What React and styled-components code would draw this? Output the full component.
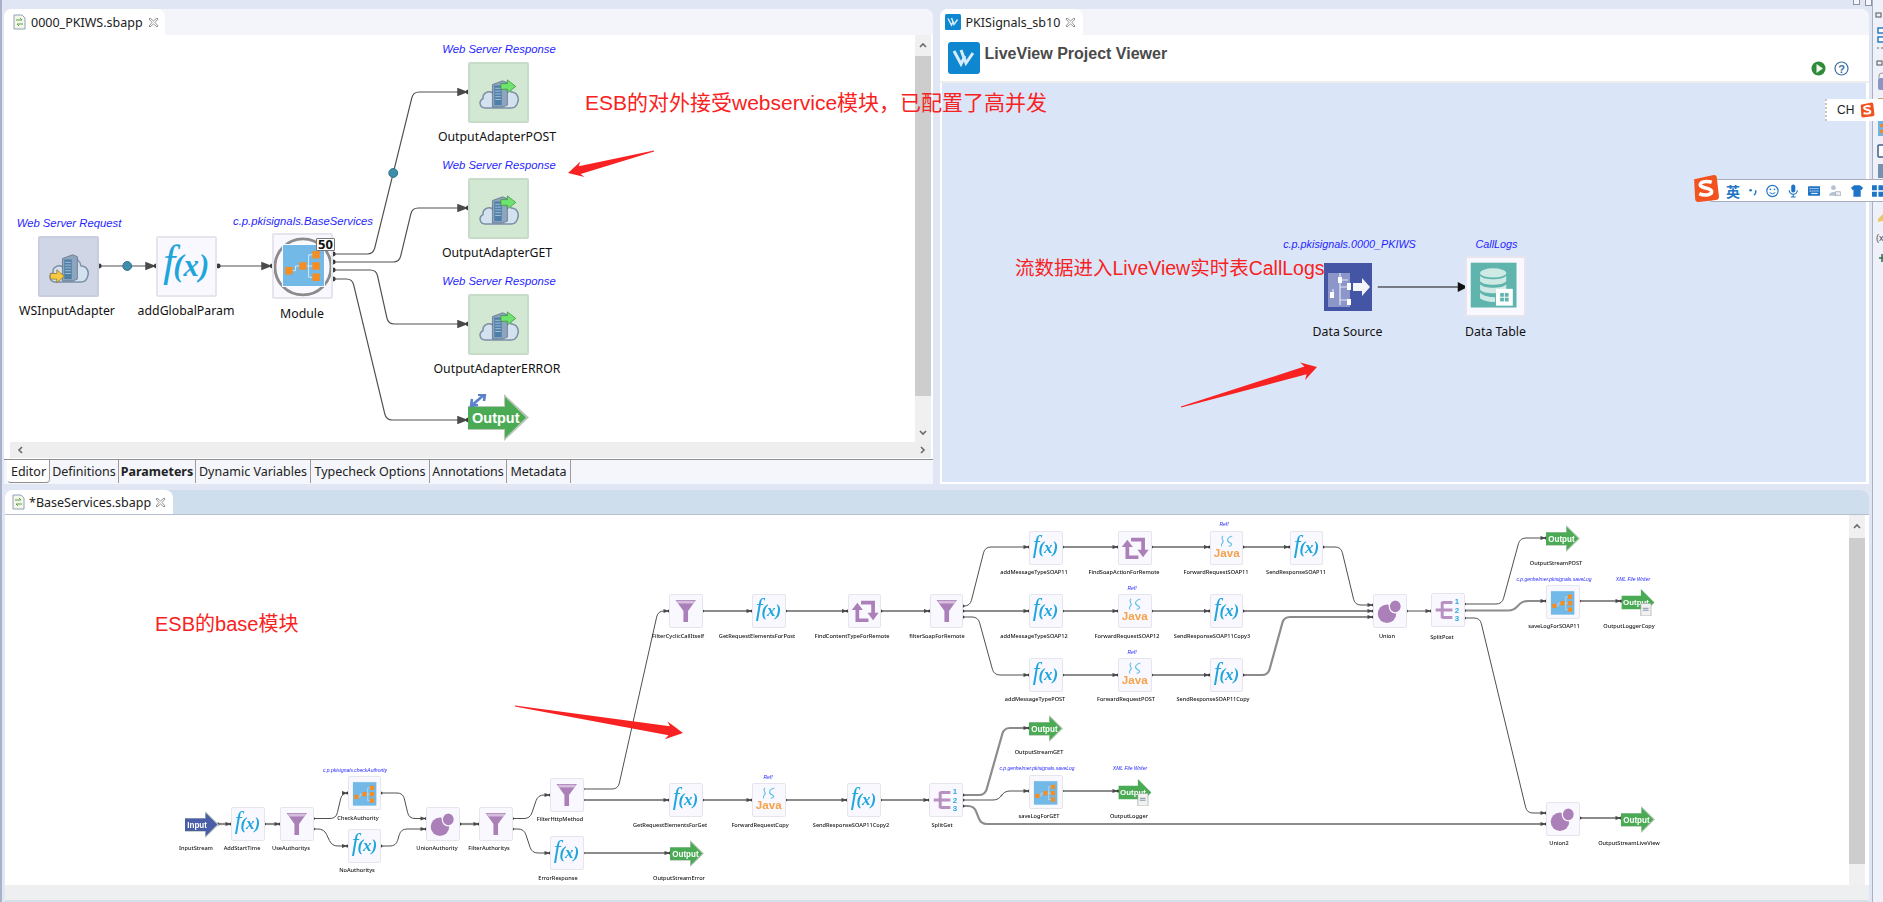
import React from 'react';
import styled, { createGlobalStyle } from 'styled-components';

const GlobalStyle = createGlobalStyle`
  html, body {
    margin: 0;
    padding: 0;
    overflow: hidden;
    background: #e0e6f4;
  }
`;

const UI_FONT = `"Noto Sans", "Liberation Sans", "Noto Sans CJK SC", sans-serif`;

/* ---------- workbench shell ---------- */

const Page = styled.div`
  position: relative;
  display: flex;
  width: 1883px;
  height: 902px;
  overflow: hidden;
  background: #e0e6f4;
  font-family: ${UI_FONT};
`;

const Workbench = styled.div`
  display: flex;
  flex-direction: column;
  width: 1872px;
  padding: 9px 3px 0 4px;
  box-sizing: border-box;
  border-left: 2px solid #a9b1c9;
`;

const TopRow = styled.div`
  display: flex;
  gap: 7px;
  height: 475px;
  margin-left: -2px;
`;

const Panel = styled.div`
  display: flex;
  flex-direction: column;
  width: ${({ $w }) => $w}px;
  height: ${({ $h }) => $h}px;
  background: #fff;
  border-radius: 8px 8px 0 0;
  overflow: hidden;
`;

const BottomPanel = styled(Panel)`
  margin-top: 6px;
  margin-left: -1px;
  flex: none;
`;

const TabStrip = styled.div`
  display: flex;
  flex: none;
  height: ${({ $h }) => $h || 26}px;
  background: ${({ $bg }) => $bg || '#f3f5fb'};
  border-bottom: ${({ $line }) => ($line ? `1px solid ${$line}` : 'none')};
  box-sizing: border-box;
`;

const FileTab = styled.div`
  display: flex;
  align-items: center;
  gap: ${({ $gap }) => $gap || 5}px;
  width: ${({ $w }) => $w}px;
  padding-left: ${({ $pad }) => $pad || 9}px;
  box-sizing: border-box;
  background: #fff;
  border-radius: 0 8px 0 0;
  font-size: 12.5px;
  color: #222;
  white-space: nowrap;
`;

const TabClose = styled.span`
  display: inline-flex;
`;

const EditorRow = styled.div`
  display: flex;
  flex: 1;
  min-height: 0;
`;

const Canvas = styled.div`
  position: relative;
  flex: 1;
  overflow: hidden;
  background: ${({ $bg }) => $bg || '#fff'};
  filter: ${({ $soft }) => ($soft ? 'blur(0.35px)' : 'none')};
`;

const VScroll = styled.div`
  display: flex;
  flex-direction: column;
  flex: none;
  width: 16px;
  margin: ${({ $m }) => $m || '0 2px 0 0'};
  background: #f0f0f0;
`;

const ScrollEnd = styled.div`
  display: flex;
  align-items: center;
  justify-content: center;
  height: ${({ $h }) => $h}px;
  flex: none;
`;

const ScrollThumb = styled.div`
  flex: ${({ $h }) => ($h ? `0 0 ${$h}px` : '1')};
  background: ${({ $empty }) => ($empty ? 'transparent' : '#cdcdcd')};
`;

const HScroll = styled.div`
  display: flex;
  align-items: center;
  justify-content: space-between;
  flex: none;
  height: 16px;
  margin: ${({ $m }) => $m || '0 2px 0 6px'};
  padding: 0 4px 0 6px;
  background: #eeeeee;
`;

const SheetTabs = styled.div`
  display: flex;
  flex: none;
  height: 25px;
  margin-top: 1px;
  padding-left: 3px;
  background: #f4f6fb;
  border-top: 1px solid #8f8f8f;
  box-sizing: border-box;
`;

const SheetTab = styled.div`
  display: flex;
  align-items: center;
  justify-content: center;
  width: ${({ $w }) => $w}px;
  height: 23px;
  font-size: 12.5px;
  font-weight: ${({ $bold }) => ($bold ? 700 : 400)};
  color: #222;
  background: ${({ $active }) => ($active ? '#fff' : 'transparent')};
  border-right: 1px solid #9a9a9a;
  border-bottom: ${({ $active }) => ($active ? '1px solid #8f8f8f' : 'none')};
  border-left: ${({ $active }) => ($active ? '1px solid transparent' : 'none')};
  border-radius: ${({ $active }) => ($active ? '0 0 4px 4px' : '0')};
  box-sizing: border-box;
  white-space: nowrap;
`;

const ViewerHeader = styled.div`
  display: flex;
  flex: none;
  height: 48px;
  padding: 7px 20px 0 8px;
  gap: 5px;
  background: #fff;
  border-bottom: 2px solid #eeeeee;
  box-sizing: border-box;
`;

const ViewerTitle = styled.div`
  flex: 1;
  margin-top: 3px;
  font-family: "Liberation Sans", sans-serif;
  font-size: 16px;
  font-weight: 700;
  color: #4a4a4a;
`;

const ViewerActions = styled.div`
  display: flex;
  gap: 8px;
  align-items: center;
  align-self: flex-end;
  margin-bottom: 5px;
`;

const ViewerBody = styled.div`
  display: flex;
  flex: 1;
  min-height: 0;
  margin: 0 3px 2px 2px;
`;

const BottomStrip = styled.div`
  flex: none;
  height: 15px;
  background: #eeeff1;
  border-bottom: 2px solid #d7e0e8;
`;

const Trim = styled.div`
  position: relative;
  flex: 1;
  background: #eef1f8;
  border-left: 1px solid #a9b1c9;
  overflow: hidden;
`;

const MiniButtons = styled.div`
  position: absolute;
  top: -2px;
  left: 1853px;
  display: flex;
  gap: 5px;
`;

const MiniButton = styled.span`
  display: block;
  width: 5px;
  height: ${({ $h }) => $h}px;
  border: 1px solid #8a93a8;
  background: #f6f7fb;
`;

/* ---------- diagram parts ---------- */

const Place = styled.div.attrs(({ $x, $y, $w, $h }) => ({
  style: { left: $x, top: $y, width: $w, height: $h },
}))`
  position: absolute;
  box-sizing: border-box;
`;

const NodeBox = styled(Place)`
  display: flex;
  align-items: center;
  justify-content: center;
  background: ${({ $tone }) =>
    $tone === 'green' ? '#d3e8d3' : $tone === 'slate' ? '#d0d6e6' : $tone === 'none' ? 'transparent' : '#f9f8fe'};
  border: ${({ $tone, $b }) =>
    $tone === 'none'
      ? 'none'
      : `${$b}px solid ${$tone === 'green' ? '#c6dcc8' : $tone === 'slate' ? '#c8cede' : '#e6e5ee'}`};
  border-radius: 2px;
  svg {
    display: block;
    width: 100%;
    height: 100%;
  }
`;

const CountBadge = styled(Place)`
  display: flex;
  align-items: center;
  justify-content: center;
  background: #fff;
  border: 1px solid #777;
  border-radius: 1px;
  font-size: 13px;
  font-weight: 700;
  line-height: 1;
  color: #111;
`;

const Caption = styled.span.attrs(({ $x, $y }) => ({
  style: { left: $x, top: $y },
}))`
  position: absolute;
  transform: translate(-50%, -50%);
  white-space: nowrap;
  font-family: ${UI_FONT};
  font-size: ${({ $size }) => $size}px;
  font-weight: ${({ $weight }) => $weight || 400};
  color: #111;
`;

const Note = styled(Caption)`
  font-family: "Liberation Sans", sans-serif;
  font-style: italic;
  color: #1f1fff;
`;

const WireLayer = styled.svg`
  position: absolute;
  inset: 0;
  width: 100%;
  height: 100%;
`;

/* ---------- page level overlays ---------- */

const Callout = styled.div.attrs(({ $x, $y }) => ({ style: { left: $x, top: $y } }))`
  position: absolute;
  transform: translateY(-50%);
  font-family: "Liberation Sans", "Noto Sans CJK SC", sans-serif;
  font-size: ${({ $size }) => $size}px;
  color: #f92222;
  white-space: nowrap;
`;

const ArrowLayer = styled.svg`
  position: absolute;
  inset: 0;
  width: 1883px;
  height: 902px;
  pointer-events: none;
`;

const ImeTray = styled.div`
  position: absolute;
  top: 99px;
  left: 1825px;
  display: flex;
  align-items: center;
  gap: 5px;
  width: 58px;
  height: 22px;
  padding-left: 10px;
  box-sizing: border-box;
  background: #fff;
  border-left: 2px dotted #c4c4c4;
  font-family: "Liberation Sans", sans-serif;
  font-size: 12px;
  color: #222;
`;

const ImeBar = styled.div`
  position: absolute;
  top: 179px;
  left: 1710px;
  display: flex;
  align-items: center;
  gap: 9px;
  width: 173px;
  height: 23px;
  padding-left: 15px;
  box-sizing: border-box;
  background: #fff;
  border: 1px solid #a7adbb;
  border-right: none;
  border-radius: 2px 0 0 2px;
  color: #1f75c5;
`;

const ImeGlyph = styled.span`
  font-family: "Noto Sans CJK SC", sans-serif;
  font-size: 14px;
  font-weight: 700;
  line-height: 1;
`;

const ImeLogo = styled.div`
  position: absolute;
  top: 174px;
  left: 1691px;
  width: 29px;
  height: 29px;
`;

const TrimIcons = styled.svg`
  display: block;
  position: absolute;
  top: 0;
  left: 0;
  width: 11px;
  height: 280px;
`;

/* ---------- icons ---------- */

const Cloud = () => (
  <path
    d="M16 47 C10 47 9 39 14 37 C13 31 20 28 24 31 C26 20 42 18 44 30 C50 30 53 36 51 41 C50 45 47 47 44 47 Z"
    fill="#d3e2ee"
    stroke="#7b8fa6"
    strokeWidth="1.6"
  />
);

const Server = () => (
  <g>
    <path d="M24 22 L35 18 L40 20 L40 44 L35 46 L24 46 Z" fill="#8fa5bd" stroke="#5a6f88" strokeWidth="0.8" />
    <rect x="26" y="23" width="8" height="21" fill="#4f7fa8" />
    <path d="M27 26 h6 M27 29 h6 M27 32 h6 M27 35 h6 M27 38 h6" stroke="#a8c3d9" strokeWidth="1" />
  </g>
);

const WebInIcon = () => (
  <svg viewBox="0 0 61 61">
    <Cloud />
    <Server />
    <path d="M11 38 H18 V34 L26 41 L18 48 V44 H11 Z" fill="#f6c945" stroke="#8b7428" strokeWidth="0.8" />
  </svg>
);

const WebOutIcon = () => (
  <svg viewBox="0 0 61 61">
    <Cloud />
    <Server />
    <path d="M33 21 H40 V17 L49 24 L40 31 V27 H33 Z" fill="#6fe36f" stroke="#3f8f3f" strokeWidth="0.8" />
  </svg>
);

const FxIcon = () => (
  <svg viewBox="0 0 61 61">
    <text x="30" y="41" textAnchor="middle" fontFamily="Liberation Serif, serif" fontStyle="italic" fontWeight="700" fontSize="33" fill="#1ea6dc">
      <tspan fontSize="47" fontWeight="400">f</tspan>
      <tspan dx="-2">(x)</tspan>
    </text>
  </svg>
);

const ModuleArt = ({ size = 45 }) => (
  <g transform={`scale(${size / 45})`}>
    <rect x="0" y="0" width="45" height="45" fill="#73b9e8" stroke="#fff" strokeWidth="1" />
    <path d="M7 28 H14 V23 H28 V11 H36 M28 23 H36 M28 23 V35 H36" stroke="#d7ecfa" strokeWidth="1" fill="none" />
    <rect x="3" y="24" width="8" height="8" fill="#f48d23" />
    <rect x="18" y="19" width="8" height="8" fill="#f48d23" />
    <rect x="32" y="7" width="8" height="8" fill="#f48d23" />
    <rect x="32" y="19" width="8" height="8" fill="#f48d23" />
    <rect x="32" y="31" width="8" height="8" fill="#f48d23" />
  </g>
);

const ModulePlain = () => (
  <svg viewBox="0 0 34 34">
    <g transform="translate(4 5)">
      <ModuleArt size={26} />
    </g>
  </svg>
);

const ModuleRing = () => (
  <svg viewBox="0 0 61 66">
    <circle cx="31" cy="34" r="30" fill="none" stroke="#8b8b8b" strokeWidth="3" />
    <g transform="translate(9 10)">
      <ModuleArt />
    </g>
  </svg>
);

const FilterIcon = () => (
  <svg viewBox="0 0 34 34">
    <path d="M6 5 H28 L19.5 17 V29 H14.5 V17 Z" fill="#ab7fb8" />
    <path d="M7 6 H27 L25 9 H9 Z" fill="#d6bedd" />
  </svg>
);

const UnionIcon = () => (
  <svg viewBox="0 0 34 34">
    <circle cx="14" cy="20" r="10" fill="#ab7fb8" />
    <ellipse cx="23" cy="12" rx="6.5" ry="7" fill="#ab7fb8" stroke="#f9f8fe" strokeWidth="1.4" />
  </svg>
);

const LoopIcon = () => (
  <svg viewBox="0 0 34 34">
    <path d="M9 15 V27 H21" fill="none" stroke="#ab7fb8" strokeWidth="4" />
    <path d="M13 8 H26 V20" fill="none" stroke="#ab7fb8" strokeWidth="4" />
    <path d="M3 16 L9 8 L15 16 Z M20 19 L26 27 L32 19 Z" fill="#ab7fb8" />
  </svg>
);

const JavaIcon = () => (
  <svg viewBox="0 0 34 34">
    <path
      d="M13 4 C9 7 16 9 12 12 C11 13 11 15 12 15 M23 4 C18 5 16 9 20 11 C24 13 22 15 19 15"
      fill="none"
      stroke="#5bbde6"
      strokeWidth="1.1"
    />
    <text x="17" y="27" textAnchor="middle" fontFamily="Liberation Sans, sans-serif" fontWeight="700" fontSize="12.5" fill="#f5a24b">
      Java
    </text>
  </svg>
);

const SplitIcon = () => (
  <svg viewBox="0 0 34 34">
    <path d="M4 17 H22 M11 9 H22 M11 25 H22 M11 8 V26" fill="none" stroke="#b791c1" strokeWidth="3.2" />
    <text fontFamily="Liberation Sans, sans-serif" fontWeight="700" fontSize="8.5" fill="#29a9df">
      <tspan x="24.5" y="11">1</tspan>
      <tspan x="24.5" y="20">2</tspan>
      <tspan x="24.5" y="29">3</tspan>
    </text>
  </svg>
);

const FlowArrow = ({ word, fill }) => (
  <svg viewBox="0 0 61 47" preserveAspectRatio="none">
    <path d="M0 12 H36 V0 L61 23.5 L36 47 V36 H0 Z" fill="#b9c7ba" />
    <path d="M0 13 H37 V3 L58 23.5 L37 44 V35 H0 Z" fill={fill} />
    <text x="4" y="29" fontFamily="Liberation Sans, sans-serif" fontWeight="700" fontSize="14.5" fill="#fff">
      {word}
    </text>
  </svg>
);

const OutputIcon = () => <FlowArrow word="Output" fill="#4bab55" />;
const InputIcon = () => <FlowArrow word="Input" fill="#4a5ea8" />;

const OutputPlug = () => (
  <svg viewBox="0 0 61 47" preserveAspectRatio="none">
    <path d="M0 12 H36 V0 L61 23.5 L36 47 V36 H0 Z" fill="#b9c7ba" />
    <path d="M0 13 H37 V3 L58 23.5 L37 44 V35 H0 Z" fill="#4bab55" />
    <text x="4" y="29" fontFamily="Liberation Sans, sans-serif" fontWeight="700" fontSize="14.5" fill="#fff">Output</text>
    <path d="M3 12 L17 0 M4 5 L3 12 L10 11 M10 1 L17 0 L16 7" stroke="#5a82c8" strokeWidth="2.6" fill="none" />
  </svg>
);

const OutputDoc = () => (
  <svg viewBox="0 0 34 28">
    <path d="M0 7 H20 V0 L34 14 L20 28 V21 H0 Z" fill="#4bab55" />
    <text x="1.5" y="17" fontFamily="Liberation Sans, sans-serif" fontWeight="700" fontSize="8.2" fill="#fff">Output</text>
    <rect x="20" y="15" width="10.5" height="13" fill="#f1f1f1" stroke="#9b9b9b" strokeWidth="0.6" />
    <path d="M22 20 h6 M22 22 h6" stroke="#7d8ea6" strokeWidth="1" />
  </svg>
);

const DataSourceIcon = () => (
  <svg viewBox="0 0 48 48">
    <rect width="48" height="48" fill="#4455a5" />
    <rect x="4" y="10" width="22" height="34" fill="#8d96c9" />
    <path d="M16 10 V42 M9 26 V32 M16 17 H24 M16 24 H24 M16 37 H24" stroke="#e3e6f5" strokeWidth="1.2" fill="none" />
    <rect x="14" y="14" width="4" height="6" fill="#fff" />
    <rect x="23" y="20" width="4" height="7" fill="#fff" />
    <rect x="6" y="29" width="4" height="6" fill="#fff" />
    <rect x="23" y="36" width="4" height="6" fill="#fff" />
    <path d="M29 20 H38 V15 L46 24 L38 33 V28 H29 Z" fill="#f4f4fb" />
  </svg>
);

const DataTableIcon = () => (
  <svg viewBox="0 0 61 61">
    <rect x="4" y="5" width="49" height="48" fill="#5fb5ad" />
    <g fill="#cfe9e5">
      <ellipse cx="28" cy="16" rx="14" ry="5" />
      <path d="M14 19 C18 24 38 24 42 19 V25 C38 30 18 30 14 25 Z" />
      <path d="M14 28 C18 33 38 33 42 28 V34 C38 39 18 39 14 34 Z" />
      <path d="M14 37 C18 42 28 42 30 42 V47 C22 47 16 45 14 43 Z" />
    </g>
    <rect x="31" y="33" width="18" height="18" fill="#fff" />
    <path d="M35 37 h10 v10 h-10 Z M40 37 v10 M35 42 h10" fill="#5fb5ad" stroke="#fff" strokeWidth="1" />
  </svg>
);

const ICONS = {
  webIn: WebInIcon,
  webOut: WebOutIcon,
  fx: FxIcon,
  ring: ModuleRing,
  module: ModulePlain,
  filter: FilterIcon,
  union: UnionIcon,
  loop: LoopIcon,
  java: JavaIcon,
  split: SplitIcon,
  out: OutputIcon,
  input: InputIcon,
  outDoc: OutputDoc,
};

const FileIcon = () => (
  <svg width="13" height="16" viewBox="0 0 13 16">
    <path d="M1 1 H9 L12 4 V15 H1 Z" fill="#f3f6e8" stroke="#8fa0b8" />
    <path d="M3 6 h6 L7 4 M10 10 H4 L6 12" fill="none" stroke="#5aa04a" strokeWidth="1" />
  </svg>
);

const CloseX = () => (
  <svg width="11" height="11" viewBox="0 0 11 11">
    <path
      d="M1 2 L2 1 L5.5 4 L9 1 L10 2 L7 5.5 L10 9 L9 10 L5.5 7 L2 10 L1 9 L4 5.5 Z"
      fill="#fff"
      stroke="#777"
      strokeWidth="0.8"
    />
  </svg>
);

const LiveViewLogo = ({ size }) => (
  <svg width={size} height={size} viewBox="0 0 32 32">
    <rect width="32" height="32" rx="3" fill="#0f86d0" />
    <path d="M6 9 L13 22 L17 14 M13 8 L18 21 L25 11" fill="none" stroke="#d5ecfa" strokeWidth="3" />
  </svg>
);

const PlayIcon = () => (
  <svg width="15" height="15" viewBox="0 0 15 15">
    <circle cx="7.5" cy="7.5" r="7" fill="#2f8a3a" />
    <path d="M5.5 3 L12 7.5 L5.5 12 Z" fill="#f1f6ee" />
  </svg>
);

const HelpIcon = () => (
  <svg width="15" height="15" viewBox="0 0 15 15">
    <circle cx="7.5" cy="7.5" r="6.5" fill="#fff" stroke="#3a6ea5" strokeWidth="1.2" />
    <text x="7.5" y="11.5" textAnchor="middle" fontFamily="Liberation Sans, sans-serif" fontWeight="700" fontSize="11" fill="#3a6ea5">?</text>
  </svg>
);

const Chevron = ({ dir }) => {
  const d = {
    up: 'M2 6 L5 3 L8 6',
    down: 'M2 4 L5 7 L8 4',
    left: 'M6 2 L3 5 L6 8',
    right: 'M4 2 L7 5 L4 8',
  }[dir];
  return (
    <svg width="10" height="10" viewBox="0 0 10 10">
      <path d={d} fill="none" stroke="#6a6a6a" strokeWidth="1.6" />
    </svg>
  );
};

const SogouLogo = ({ size }) => (
  <svg width={size} height={size} viewBox="0 0 28 28">
    <path d="M3 5 L22 1 Q25 1 25 4 L27 22 Q27 25 24 25 L7 27 Q4 27 4 24 Z" fill="#f2521d" />
    <path d="M20 8 C14 6 8 8 9 11 C10 14 20 13 20 17 C20 21 12 21 8 19" fill="none" stroke="#fff" strokeWidth="3.4" />
  </svg>
);

const TrimIconSet = () => (
  <TrimIcons viewBox="0 0 11 280">
    <rect x="3" y="13" width="5" height="4" fill="none" stroke="#555" />
    <rect x="5" y="28" width="8" height="5" fill="#fff" stroke="#1b75bc" strokeWidth="1.4" />
    <rect x="5" y="37" width="8" height="5" fill="#fff" stroke="#1b75bc" strokeWidth="1.4" />
    <path d="M4 48 h2 M8 48 h2" stroke="#999" strokeWidth="1.4" />
    <rect x="4" y="61" width="5" height="4" fill="none" stroke="#555" />
    <rect x="5" y="78" width="8" height="12" rx="2" fill="#8a95c4" />
    <path d="M6 78 v-2 a3 3 0 0 1 6 0 v2" fill="none" stroke="#999" />
    <rect x="5" y="98" width="8" height="3" fill="#c0a96a" />
    <rect x="5" y="121" width="8" height="15" fill="#6fb4e2" />
    <rect x="7" y="124" width="3" height="3" fill="#f08a24" />
    <rect x="7" y="130" width="3" height="3" fill="#f08a24" />
    <rect x="5" y="145" width="8" height="12" rx="1" fill="#fff" stroke="#3f5e8c" strokeWidth="1.5" />
    <rect x="5" y="164" width="8" height="14" fill="#7593b0" />
    <path d="M5 219 L10 214 L13 214 L13 220 L5 222 Z" fill="#eac76a" />
    <text x="3" y="241" fontFamily="Liberation Sans, sans-serif" fontSize="9" fill="#445">(x</text>
    <path d="M6 258 H13 M9 254 V262" stroke="#2e6e4a" strokeWidth="1.5" />
  </TrimIcons>
);

const ImeDots = () => (
  <svg width="10" height="14" viewBox="0 0 10 14">
    <circle cx="2" cy="6" r="1.6" fill="#1f75c5" />
    <path d="M8 6 C9 9 8 11 6 12" fill="none" stroke="#1f75c5" strokeWidth="1.8" />
  </svg>
);

const ImeSmile = () => (
  <svg width="16" height="16" viewBox="0 0 16 16">
    <circle cx="8" cy="8" r="7" fill="#fff" stroke="#1f75c5" strokeWidth="1.4" />
    <circle cx="5.5" cy="6" r="1" fill="#1f75c5" />
    <circle cx="10.5" cy="6" r="1" fill="#1f75c5" />
    <path d="M4.5 10 Q8 13 11.5 10" fill="none" stroke="#1f75c5" strokeWidth="1.2" />
  </svg>
);

const ImeMic = () => (
  <svg width="13" height="16" viewBox="0 0 13 16">
    <rect x="4" y="0" width="5" height="10" rx="2.5" fill="#1f75c5" />
    <path d="M1.5 7 a5 5 0 0 0 10 0 M6.5 12 V15 M3.5 15.5 H9.5" fill="none" stroke="#1f75c5" strokeWidth="1.4" />
  </svg>
);

const ImeKeys = () => (
  <svg width="16" height="12" viewBox="0 0 16 12">
    <rect width="16" height="12" rx="1" fill="#1f75c5" />
    <path d="M2 3 h12 M2 6 h12" stroke="#fff" strokeWidth="1.2" strokeDasharray="1.4 1" />
    <path d="M4 9 h8" stroke="#fff" strokeWidth="1.2" />
  </svg>
);

const ImeUser = () => (
  <svg width="15" height="15" viewBox="0 0 15 15">
    <circle cx="5.5" cy="4" r="3" fill="#b4c2d2" />
    <path d="M0 14 C0 8 10 8 11 12 L11 14 Z" fill="#b4c2d2" />
    <rect x="8" y="9" width="6" height="5" fill="#e7ebf0" stroke="#9aa7b6" strokeWidth="0.8" />
  </svg>
);

const ImeShirt = () => (
  <svg width="15" height="14" viewBox="0 0 15 14">
    <path d="M4 0 H11 L15 3 L13 6 L12 5 V14 H3 V5 L2 6 L0 3 Z" fill="#1f75c5" />
  </svg>
);

const ImeGrid = () => (
  <svg width="14" height="14" viewBox="0 0 14 14">
    <path d="M0 0 h6 v6 h-6 Z M8 0 h6 v6 h-6 Z M0 8 h6 v6 h-6 Z M8 8 h6 v6 h-6 Z" fill="#1f75c5" />
  </svg>
);

/* ---------- wires ---------- */

const wire = ([x1, y1, x2, y2, b1, b2]) => {
  if (b1 === undefined) return `M${x1} ${y1}L${x2} ${y2}`;
  const r = 6;
  const len = Math.hypot(b2 - b1, y2 - y1);
  const ux = (b2 - b1) / len;
  const uy = (y2 - y1) / len;
  return [
    `M${x1} ${y1}L${b1 - r} ${y1}`,
    `Q${b1} ${y1} ${b1 + ux * r} ${y1 + uy * r}`,
    `L${b2 - ux * r} ${y2 - uy * r}`,
    `Q${b2} ${y2} ${b2 + r} ${y2}`,
    `L${x2} ${y2}`,
  ].join('');
};

const Wires = ({ list, box, dot, head, thin, heavy, junctions = [] }) => (
  <WireLayer viewBox={box}>
    {list.map((w, i) => {
      const [x1, y1, x2, y2] = w;
      const thick = w[6];
      return (
        <g key={i}>
          <path
            d={wire(w)}
            fill="none"
            stroke={thick ? '#8c8c8c' : '#505050'}
            strokeWidth={thick ? heavy : thin}
          />
          <circle cx={x1} cy={y1} r={dot} fill={w[7] || '#3c3c3c'} />
          <path d={`M${x2 - head} ${y2 - head * 0.38}L${x2} ${y2}L${x2 - head} ${y2 + head * 0.38}Z`} fill="#4a4a4a" />
          <circle cx={x2} cy={y2} r={dot} fill="#3c3c3c" />
        </g>
      );
    })}
    {junctions.map(([x, y], i) => (
      <circle key={i} cx={x} cy={y} r="4.4" fill="#3f8eab" stroke="#2c6c86" />
    ))}
  </WireLayer>
);

/* ---------- data: all coordinates are page pixels, Diagram shifts them into its canvas ---------- */

const Diagram = ({ nodes, ox, oy, size, noteSize, border, weight }) =>
  nodes.map((n) => {
    const Icon = ICONS[n.kind];
    return (
      <React.Fragment key={n.label}>
        <NodeBox $x={n.x - ox} $y={n.y - oy} $w={n.w} $h={n.h} $tone={n.tone} $b={border}>
          <Icon />
        </NodeBox>
        <Caption $x={n.lx - ox} $y={n.ly - oy} $size={size} $weight={weight}>
          {n.label}
        </Caption>
        {n.note && (
          <Note $x={n.nx - ox} $y={n.ny - oy} $size={noteSize}>
            {n.note}
          </Note>
        )}
      </React.Fragment>
    );
  });

const big = (kind, x, y, label, lx, ly, tone, note, nx, ny, w = 61, h = 61) => ({
  kind, x, y, w, h, label, lx, ly, tone, note, nx, ny,
});

const topNodes = [
  big('webIn', 38, 236, 'WSInputAdapter', 67, 310, 'slate', 'Web Server Request', 69, 223),
  big('fx', 156, 236, 'addGlobalParam', 186, 310),
  big('ring', 272, 233, 'Module', 302, 313, undefined, 'c.p.pkisignals.BaseServices', 303, 221, 61, 66),
  big('webOut', 468, 62, 'OutputAdapterPOST', 497, 136, 'green', 'Web Server Response', 499, 49),
  big('webOut', 468, 178, 'OutputAdapterGET', 497, 252, 'green', 'Web Server Response', 499, 165),
  big('webOut', 468, 294, 'OutputAdapterERROR', 497, 368, 'green', 'Web Server Response', 499, 281),
];

const topWires = [
  [99, 266, 156, 266],
  [218, 266, 272, 266],
  [333, 254, 468, 92, 373, 413],
  [333, 262, 468, 208, 399, 412],
  [333, 270, 468, 324, 376, 388],
  [333, 279, 468, 420, 352, 386],
];

const cell = (kind, x, y, label, lx, ly, note, nx, ny, w = 33.5, h = 34) => ({
  kind, x, y, w, h, label, lx, ly, note, nx, ny,
});

const arrowCell = (kind, x, y, label, lx, ly, note, nx, ny) => ({
  kind, x, y, w: 34, h: 27, label, lx, ly, note, nx, ny, tone: 'none',
});

const baseNodes = [
  arrowCell('input', 185, 811, 'InputStream', 196, 848),
  cell('fx', 231, 807, 'AddStartTime', 242, 848),
  cell('filter', 280, 807, 'UseAuthoritys', 291, 848),
  cell('module', 347.5, 776, 'CheckAuthority', 358, 818, 'c.p.pkisignals.checkAuthority', 355, 770),
  cell('fx', 347.5, 829, 'NoAuthoritys', 357, 870),
  cell('union', 426, 807, 'UnionAuthority', 437, 848),
  cell('filter', 479, 807, 'FilterAuthoritys', 489, 848),
  cell('filter', 550, 778, 'FilterHttpMethod', 560, 819),
  cell('fx', 550, 836, 'ErrorResponse', 558, 878),
  arrowCell('out', 670, 840, 'OutputStreamError', 679, 878),
  cell('fx', 669, 783, 'GetRequestElementsForGet', 670, 825),
  cell('java', 752, 783, 'ForwardRequestCopy', 760, 825, 'Ref!', 768, 777),
  cell('fx', 847, 783, 'SendResponseSOAP11Copy2', 851, 825),
  cell('split', 929, 783, 'SplitGet', 942, 825),
  arrowCell('out', 1029, 715, 'OutputStreamGET', 1039, 752),
  cell('module', 1029, 775, 'saveLogForGET', 1039, 816, 'c.p.genhelmer.pkisignals.saveLog', 1037, 768),
  arrowCell('outDoc', 1118, 779, 'OutputLogger', 1129, 816, 'XML File Writer', 1130, 768),
  cell('filter', 669, 594, 'FilterCyclicCallItself', 678, 636),
  cell('fx', 752, 594, 'GetRequestElementsForPost', 757, 636),
  cell('loop', 847.5, 594, 'FindContentTypeForRemote', 852, 636),
  cell('filter', 929.5, 594, 'filterSoapForRemote', 937, 636),
  cell('fx', 1029, 531, 'addMessageTypeSOAP11', 1034, 572),
  cell('loop', 1118, 531, 'FindSoapActionForRemote', 1124, 572),
  cell('java', 1209.5, 531, 'ForwardRequestSOAP11', 1216, 572, 'Ref!', 1224, 524),
  cell('fx', 1289.5, 531, 'SendResponseSOAP11', 1296, 572),
  cell('fx', 1029, 594, 'addMessageTypeSOAP12', 1034, 636),
  cell('java', 1118, 594, 'ForwardRequestSOAP12', 1127, 636, 'Ref!', 1132, 588),
  cell('fx', 1209.5, 594, 'SendResponseSOAP11Copy3', 1212, 636),
  cell('fx', 1029, 658, 'addMessageTypePOST', 1035, 699),
  cell('java', 1118, 658, 'ForwardRequestPOST', 1126, 699, 'Ref!', 1132, 652),
  cell('fx', 1209.5, 658, 'SendResponseSOAP11Copy', 1213, 699),
  cell('union', 1373, 594, 'Union', 1387, 636),
  cell('split', 1431, 593, 'SplitPost', 1442, 637),
  arrowCell('out', 1546, 525, 'OutputStreamPOST', 1556, 563),
  cell('module', 1546, 585, 'saveLogForSOAP11', 1554, 626, 'c.p.genhelmer.pkisignals.saveLog', 1554, 579),
  arrowCell('outDoc', 1621, 589, 'OutputLoggerCopy', 1629, 626, 'XML File Writer', 1633, 579),
  cell('union', 1546, 802, 'Union2', 1559, 843),
  arrowCell('out', 1621, 806, 'OutputStreamLiveView', 1629, 843),
];

const H = true;
const S = undefined;

const baseWires = [
  [218, 824, 231, 824, S, S, H],
  [264.5, 824, 280, 824, S, S, H],
  [313.5, 818.5, 347.5, 793, 336, 342],
  [313.5, 829, 347.5, 846, 324, 332],
  [381, 793, 426, 818.5, 403, 409],
  [381, 846, 426, 829, 396, 401],
  [460, 824, 479, 824, S, S, H],
  [512.5, 818.5, 550, 795, 530, 538],
  [512.5, 829, 550, 853, 524, 532],
  [583, 789, 669, 611, 618, 658],
  [583, 800, 669, 800, S, S, H],
  [583, 853, 670, 853, S, S, H],
  [702.5, 800, 752, 800, S, S, H],
  [785.5, 800, 847, 800, S, S, H],
  [880.5, 800, 929, 800, S, S, H],
  [702.5, 611, 752, 611, S, S, H],
  [785.5, 611, 847.5, 611, S, S, H],
  [881, 611, 929.5, 611, S, S, H],
  [963, 606, 1029, 547, 970, 985],
  [963, 611, 1029, 611, S, S, H],
  [963, 617, 1029, 675, 978, 994],
  [1062.5, 547, 1118, 547, S, S, H],
  [1151.5, 547, 1209.5, 547, S, S, H],
  [1243, 547, 1289.5, 547, S, S, H],
  [1323, 547, 1373, 605, 1341, 1355],
  [1062.5, 611, 1118, 611, S, S, H],
  [1151.5, 611, 1209.5, 611, S, S, H],
  [1243, 611, 1373, 611, S, S, H],
  [1062.5, 675, 1118, 675, S, S, H],
  [1151.5, 675, 1209.5, 675, S, S, H],
  [1243, 675, 1373, 617, 1268, 1284, H],
  [1406.5, 611, 1431, 611],
  [1464.5, 604, 1546, 538, 1502, 1520],
  [1464.5, 610.5, 1546, 601, 1514, 1522, H],
  [1464.5, 618, 1546, 813, 1480, 1527],
  [1579.5, 601, 1621, 601, S, S, H, '#8c1f1f'],
  [963, 795, 1029, 728, 985, 1004, H],
  [963, 800, 1029, 791, 999, 1004],
  [963, 806, 1546, 824, 974, 981, H],
  [1062, 791, 1118, 791, S, S, H],
  [1580, 818, 1621, 818, S, S, H],
];

const sheetTabs = [
  ['Editor', 43],
  ['Definitions', 69],
  ['Parameters', 77],
  ['Dynamic Variables', 115],
  ['Typecheck Options', 119],
  ['Annotations', 77],
  ['Metadata', 64],
];

const redArrow = (x1, y1, x2, y2, tail, neck, barb, headLen) => {
  const len = Math.hypot(x2 - x1, y2 - y1);
  const ux = (x2 - x1) / len;
  const uy = (y2 - y1) / len;
  const px = -uy;
  const py = ux;
  const nx = x2 - ux * headLen;
  const ny = y2 - uy * headLen;
  const pts = [
    [x1 + px * tail, y1 + py * tail],
    [nx + px * neck, ny + py * neck],
    [nx - ux * 3 + px * barb, ny - uy * 3 + py * barb],
    [x2, y2],
    [nx - ux * 3 - px * barb, ny - uy * 3 - py * barb],
    [nx - px * neck, ny - py * neck],
    [x1 - px * tail, y1 - py * tail],
  ];
  return pts.map((p) => p.map((v) => v.toFixed(1)).join(',')).join(' ');
};

const App = () => (
  <Page>
    <GlobalStyle />
    <Workbench>
      <TopRow>
        <Panel $w={929} $h={475}>
          <TabStrip>
            <FileTab $w={161}>
              <FileIcon />
              0000_PKIWS.sbapp
              <TabClose><CloseX /></TabClose>
            </FileTab>
          </TabStrip>
          <EditorRow>
            <Canvas>
              <Wires
                list={topWires}
                box="4 35 910 407"
                dot={2.4}
                head={11}
                thin={1.2}
                junctions={[[127, 266], [393, 173]]}
              />
              <Diagram nodes={topNodes} ox={4} oy={35} size={12.3} noteSize={11.3} border={2} />
              <CountBadge $x={312} $y={203} $w={19} $h={13}>50</CountBadge>
              <NodeBox $x={464} $y={359} $w={61} $h={47} $tone="none" $b={0}>
                <OutputPlug />
              </NodeBox>
            </Canvas>
            <VScroll>
              <ScrollEnd $h={21}><Chevron dir="up" /></ScrollEnd>
              <ScrollThumb $h={340} />
              <ScrollThumb $empty />
              <ScrollEnd $h={21}><Chevron dir="down" /></ScrollEnd>
            </VScroll>
          </EditorRow>
          <HScroll>
            <Chevron dir="left" />
            <Chevron dir="right" />
          </HScroll>
          <SheetTabs>
            {sheetTabs.map(([name, w], i) => (
              <SheetTab key={name} $w={w} $active={i === 0} $bold={name === 'Parameters'}>
                {name}
              </SheetTab>
            ))}
          </SheetTabs>
        </Panel>

        <Panel $w={930} $h={475}>
          <TabStrip>
            <FileTab $w={143} $pad={5}>
              <LiveViewLogo size={16} />
              PKISignals_sb10
              <TabClose><CloseX /></TabClose>
            </FileTab>
          </TabStrip>
          <ViewerHeader>
            <LiveViewLogo size={32} />
            <ViewerTitle>LiveView Project Viewer</ViewerTitle>
            <ViewerActions>
              <PlayIcon />
              <HelpIcon />
            </ViewerActions>
          </ViewerHeader>
          <ViewerBody>
            <Canvas $bg="#dbe5f8">
              <WireLayer viewBox="942 83 925 399">
                <path d="M1378 287 H1460" stroke="#111" strokeWidth="1.2" />
                <path d="M1458 282 L1468 287 L1458 292 Z" fill="#111" />
              </WireLayer>
              <NodeBox $x={382} $y={180} $w={48} $h={48} $tone="none" $b={0}>
                <DataSourceIcon />
              </NodeBox>
              <Caption $x={406} $y={248} $size={12.3}>Data Source</Caption>
              <Note $x={408} $y={161} $size={10.8}>c.p.pkisignals.0000_PKIWS</Note>
              <NodeBox $x={523.5} $y={173} $w={61} $h={61} $b={2}>
                <DataTableIcon />
              </NodeBox>
              <Caption $x={554} $y={248} $size={12.3}>Data Table</Caption>
              <Note $x={555} $y={161} $size={10.8}>CallLogs</Note>
            </Canvas>
          </ViewerBody>
        </Panel>
      </TopRow>

      <BottomPanel $w={1864} $h={412}>
        <TabStrip $h={25} $bg="#cfdeed" $line="#b4bfd0">
          <FileTab $w={168} $pad={7} $gap={4}>
            <FileIcon />
            *BaseServices.sbapp
            <TabClose><CloseX /></TabClose>
          </FileTab>
        </TabStrip>
        <EditorRow>
          <Canvas $soft>
            <Wires list={baseWires} box="5 515 1844 370" dot={1.5} head={5.5} thin={1} heavy={2.2} />
            <Diagram nodes={baseNodes} ox={5} oy={515} size={5.6} noteSize={5} border={1} weight={500} />
          </Canvas>
          <VScroll $m="0 4px 0 0">
            <ScrollEnd $h={23}><Chevron dir="up" /></ScrollEnd>
            <ScrollThumb $h={326} />
            <ScrollThumb $empty />
          </VScroll>
        </EditorRow>
        <BottomStrip />
      </BottomPanel>
    </Workbench>

    <Trim>
      <TrimIconSet />
    </Trim>

    <MiniButtons>
      <MiniButton $h={5} />
      <MiniButton $h={6} />
    </MiniButtons>

    <Callout $x={585} $y={101} $size={21}>ESB的对外接受webservice模块，已配置了高并发</Callout>
    <Callout $x={1015} $y={266} $size={19.5}>流数据进入LiveView实时表CallLogs</Callout>
    <Callout $x={155} $y={622} $size={20}>ESB的base模块</Callout>

    <ArrowLayer viewBox="0 0 1883 902">
      <polygon points={redArrow(654, 151, 568, 173, 0.5, 4, 8, 12)} fill="#f92222" />
      <polygon points={redArrow(1181, 407, 1317, 367, 0.5, 4, 9, 12)} fill="#f92222" />
      <polygon points={redArrow(515, 706, 683, 733, 0.5, 4.5, 9, 14)} fill="#f92222" />
    </ArrowLayer>

    <ImeTray>
      CH
      <SogouLogo size={16} />
    </ImeTray>

    <ImeBar>
      <ImeGlyph>英</ImeGlyph>
      <ImeDots />
      <ImeSmile />
      <ImeMic />
      <ImeKeys />
      <ImeUser />
      <ImeShirt />
      <ImeGrid />
    </ImeBar>
    <ImeLogo>
      <SogouLogo size={29} />
    </ImeLogo>
  </Page>
);

export default App;
